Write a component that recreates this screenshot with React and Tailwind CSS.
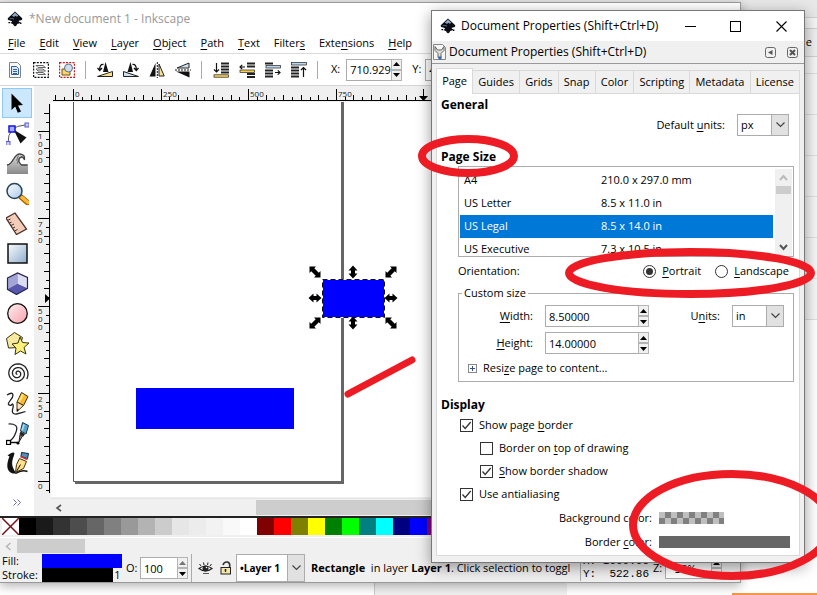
import React from "react";

/* Renders a label in which the character after "_" is the underlined access key. */
function Key({ children }) {
  const at = children.indexOf("_");
  if (at < 0) return <>{children}</>;
  return (
    <>
      {children.slice(0, at)}
      <span className="underline underline-offset-2">{children[at + 1]}</span>
      {children.slice(at + 2)}
    </>
  );
}

function InkscapeLogo() {
  return (
    <svg width="16" height="16" viewBox="0 0 16 16" aria-hidden="true">
      <path d="M8 0.5 L15 7 Q16.2 8.8 13 9.4 Q10.6 9.8 12.4 11 Q14.6 11.8 11.8 12.6 Q9.8 13 9.6 14.2 Q8.2 16 6.8 14.6 Q6.6 13.2 4.6 12.6 Q2.8 12 4.8 11 Q5.6 10 3 9.4 Q-0.2 8.8 1 7 Z" fill="#0b0b12" />
      <path d="M8 1.4 L11.4 4.8 L9.8 5.8 L8.4 4.8 L7 6 L5.6 5 L4.6 4.9 Z" fill="#8fa6c4" />
      <path d="M2.6 7.8 Q5 6.8 7 8.2" stroke="#56678a" fill="none" />
      <path d="M1.4 11.6h1.8M13 12.2h1.4" stroke="#111" strokeWidth="1.4" />
    </svg>
  );
}

const menus = ["_File", "_Edit", "_View", "_Layer", "_Object", "_Path", "_Text", "Filter_s", "Exte_nsions", "_Help"];

function Stack({ bars, accent, color, arrow }) {
  return (
    <>
      {bars.map(([x, y, w], i) => (
        <path key={i} d={`M${x} ${y}h${w}`} stroke="#222" strokeWidth="2" />
      ))}
      <rect x={accent[0]} y={accent[1]} width={accent[2]} height="2.4" fill={color} stroke="#222" strokeWidth="0.7" />
      <path d={arrow} stroke="#111" strokeWidth="1.2" fill="none" />
    </>
  );
}

const toolbar = [
  ["Select all", <>
    <path d="M2.500 .5h8l3 3v12h-11z" fill="#f7f8f8" stroke="#7b8388" />
    <path d="M4.500 4.500h5l2 2v6h-7z" fill="#dbe8fa" stroke="#2f5f9f" />
    <path d="M6 7.500h4M6 9.500h4M6 11.500h4" stroke="#2f5f9f" />
  </>],
  ["Select all in layers", <>
    <rect x=".6" y=".6" width="14.800" height="14.800" fill="none" stroke="#111" strokeWidth="1.2" strokeDasharray="2 1.2" />
    <path d="M3 3.500h7l2.500 2H5zM3 7h7l2.500 2H5zM3 10.500h7l2.500 2H5z" fill="#eee" stroke="#666" />
  </>],
  ["Deselect", <>
    <rect x=".6" y=".6" width="14.800" height="14.800" fill="none" stroke="#d01818" strokeWidth="1.2" strokeDasharray="2 1.2" />
    <path d="M3 7h8v6H3z" fill="#fbd66a" stroke="#6d5210" />
    <circle cx="9.500" cy="6" r="4" fill="#cfdcec" stroke="#5c7089" />
  </>],
  null,
  ["Rotate 90° counter-clockwise", <>
    <path d="M8.500 0L11.500 10H6z" fill="#111" />
    <path d="M.5 14.500L15.500 9.500V14.500z" fill="#fbe08c" stroke="#222" />
    <path d="M6.500 2.500Q2.500 2 2.700 8M.5 6l2.200 2.500L5 6" fill="none" stroke="#111" strokeWidth="1.300" />
  </>],
  ["Rotate 90° clockwise", <>
    <path d="M7.500 0L4.500 10H10z" fill="#111" />
    <path d="M15.500 14.500L.5 9.500V14.500z" fill="#cfe0ee" stroke="#222" />
    <path d="M9.500 2.500Q13.500 2 13.300 8M15.500 6l-2.200 2.500L11 6" fill="none" stroke="#111" strokeWidth="1.300" />
  </>],
  ["Flip horizontally", <>
    <path d="M6.500 1v13.500H.5z" fill="#111" /><path d="M10 2v12h5.200z" fill="#fbe08c" stroke="#222" />
    <path d="M8.300 0v16" stroke="#111" strokeDasharray="2 1" />
  </>],
  ["Flip vertically", <>
    <path d="M14 6V1L2 6z" fill="#cfe0ee" stroke="#222" /><path d="M14.500 9.500v6L1 9.500z" fill="#111" />
    <path d="M0 8h16" stroke="#111" strokeDasharray="2 1" />
  </>],
  null,
  ["Lower to bottom", <Stack bars={[[8, 1.5, 8], [8, 4.5, 8], [8, 7.500, 8], [8, 10.500, 8]]} accent={[1, 12.800, 14.500]} color="#fbcf50" arrow="M3.500 1v9M1 7.500l2.500 2.500L6 7.500" />],
  ["Lower", <Stack bars={[[8, 1.5, 8], [8, 4.500, 8], [8, 12, 8], [8, 15, 8]]} accent={[1, 8, 14.500]} color="#fbcf50" arrow="M6 5H1M3.200 2.800L1 5l2.200 2.200" />],
  ["Raise", <Stack bars={[[0, 1.5, 8], [0, 8.500, 8], [0, 11.500, 8], [0, 14.500, 8]]} accent={[1, 3.600, 14.500]} color="#bcd6f0" arrow="M10 10.500h5M12.800 8.300l2.200 2.200-2.200 2.200" />],
  ["Raise to top", <Stack bars={[[0, 5.5, 8], [0, 8.500, 8], [0, 11.500, 8], [0, 14.500, 8]]} accent={[.5, .6, 15]} color="#bcd6f0" arrow="M12.500 15V5.500M10 8l2.500-2.500L15 8" />],
  null,
];

/* Archimedean spiral, clockwise from the centre, ending at the lower right. */
const spiral = Array.from({ length: 85 }, (_, i) => {
  const t = i / 84;
  const angle = Math.PI * (0.17 - 5.6 * (1 - t));
  const r = 0.6 + 10.2 * t;
  return `${(11 + r * Math.cos(angle)).toFixed(1)},${(11 + r * Math.sin(angle)).toFixed(1)}`;
}).join(" ");

const tools = [
  ["Select", <path d="M5 1l11.500 11.500-5 .4 3 6-3.200 1.400-2.600-6.200L5 17.500z" fill="#000" />],
  ["Node", <>
    <path d="M1.500 21Q1 3 19 2.500" stroke="#555" fill="none" />
    <path d="M7 7l13 8-6 6z" fill="#111" />
    <rect x="2.500" y="3.500" width="6" height="6" fill="#a9b0f2" stroke="#1515e0" strokeWidth="1.500" />
    <rect x="18.500" y=".5" width="4" height="4" fill="#c8cbf7" stroke="#5558d8" /><rect x="-.5" y="19" width="4" height="4" fill="#c8cbf7" stroke="#5558d8" />
  </>],
  ["Tweak", <>
    <path d="M.5 12C7 12 7 2 13 2q6 .5 5 5.500-2-3-4.500-1-2.500 4 2 6l6-.5v9.500H.5z" fill="url(#grey)" />
    <path d="M.5 12.500C7 12 7 1 13.500 1.500q5.500.5 4.500 6-1-4-4.500-2.500-3 3.500 1.500 7.500h6" fill="none" stroke="#444" strokeWidth="1.300" />
    <path d="M10 8l2-5M11 11l1-4M14 3.500l2 1" stroke="#444" strokeWidth=".8" />
  </>],
  ["Zoom", <>
    <path d="M14.500 14.500l7 6" stroke="#a86200" strokeWidth="5.500" strokeLinecap="round" /><path d="M15.500 15l6 5" stroke="#fdb835" strokeWidth="3.500" strokeLinecap="round" />
    <circle cx="8" cy="8.500" r="7.500" fill="url(#lens)" stroke="#26425f" strokeWidth="1.500" />
  </>],
  ["Measure", <>
    <path d="M-.5 5.500L8.500.5l11.500 16-10 5.500z" fill="#f4ccba" stroke="#4b302a" strokeWidth="1.300" />
    <path d="M1 8l3-1.500M3 10.500l2-1M4.500 13l3-1.500M6.500 15.500l2-1M8 18.500l3-1.500" stroke="#4b302a" />
  </>],
  ["Rectangle", <rect x="1.500" y="1.500" width="19" height="19" fill="url(#box)" stroke="#111" strokeWidth="1.500" />],
  ["3D box", <>
    <path d="M1 5.500L11 .5l10 4.500v11L10 22 1 17z" fill="#5b5ba8" />
    <path d="M1 5.500L11 .5v11L1 17z" fill="#a3a5d6" /><path d="M11 .5l10 4.500v11l-10-4.500z" fill="#dcdcf2" /><path d="M1 17l10-5.500 10 4.500-11 6z" fill="#5757ad" />
    <path d="M1 5.500L11 .5l10 4.500v11L10 22 1 17z" fill="none" stroke="#25254d" strokeWidth="1.200" />
  </>],
  ["Ellipse", <circle cx="11" cy="11" r="9.800" fill="url(#pink)" stroke="#111" strokeWidth="1.300" />],
  ["Star", <>
    <path d="M0 6L8 0l8 5-3 10-11 .5z" fill="#f6eaa0" stroke="#39330b" />
    <path d="M13.500 4.500l2.500 5.500 6.500.5-5 4.500 2 6.500-5.500-3-5.500 3.500 1-6.500-4-4 6-1z" fill="#fdf07a" stroke="#39330b" />
  </>],
  ["Spiral", <polyline points={spiral} fill="none" stroke="#222" strokeWidth="1.300" />],
  ["Pencil", <>
    <path d="M.5 2.500Q6-1 6.500 2.500C6.500 7 1 9 2 12q2 2 4-.5 1.500 1 0 5.500-1 5 4 4.500 6-1.500 9-2.500" fill="none" stroke="#222" strokeWidth="1.300" />
    <path d="M15 0l6.500 4L17 13l-6.500-3.500z" fill="#f8b830" stroke="#4b2e00" /><path d="M16.500 2L12.500 9.500" stroke="#ffe680" strokeWidth="2" />
    <path d="M10.500 9.500L17 13l-6.500 6z" fill="#f7e3c0" stroke="#4b2e00" /><path d="M10.500 19l.1-3 2 1.200z" fill="#111" />
  </>],
  ["Bezier", <>
    <path d="M2 1.500Q12 1 10 8T4 18" fill="none" stroke="#222" strokeWidth="1.200" /><path d="M3 20h8" stroke="#111" strokeWidth="1.500" />
    <path d="M16 0l6 3-2.500 8.500-5.500-3z" fill="#5aa4cc" stroke="#10374c" /><path d="M17.500 2L15.500 8" stroke="#b9dcf0" strokeWidth="1.500" />
    <path d="M14 9l4.500 2.500-1.500 2.500-4-2.500z" fill="#222" /><path d="M13.500 12l2.500 1.500-3.500 6z" fill="#888" stroke="#222" />
    <rect x="0" y="18" width="4" height="4" fill="#fff" stroke="#000" strokeWidth="1.300" /><circle cx="11.500" cy="20.500" r="1.600" />
  </>],
  ["Calligraphy", <>
    <path d="M1 3Q7-2 8 1C6 8 3 12 10 21 0 22-1 13 3 4z" fill="#111" /><path d="M9 21q6-4 12-2" stroke="#111" strokeWidth="1.500" fill="none" />
    <path d="M15 0l7 1-1 5-6.500-2z" fill="#4e94c0" stroke="#123" /><path d="M14 4l7 3" stroke="#c33" strokeWidth="1.800" /><path d="M13 6l7 3-3 7-8 4 1-8z" fill="#fce08c" stroke="#4b2e00" /><path d="M10 19l4-7" stroke="#111" />
  </>],
];

const swatches = [
  "#000000", "#1a1a1a", "#333333", "#4d4d4d", "#666666", "#808080", "#999999", "#b3b3b3", "#cccccc", "#e6e6e6",
  "#ececec", "#f2f2f2", "#f9f9f9", "#ffffff", "#800000", "#ff0000", "#808000", "#ffff00", "#008000", "#00ff00",
  "#008080", "#00ffff", "#000080", "#0000ff", "#800080",
];

function Arrow({ d, label, dim }) {
  return (
    <button aria-label={label} className="flex h-[11px] w-[11px] items-center justify-center border border-[#b4b4b4] bg-[#f0f0f0]">
      <svg width="7" height="4" viewBox="0 0 7 4"><path d={d} fill={dim ? "#777" : "#000"} /></svg>
    </button>
  );
}

function Spin({ id, label, value, width, dim }) {
  return (
    <div className="flex items-center">
      <input id={id} aria-label={label} defaultValue={value} className={`h-[22px] border border-r-0 border-[#acacac] bg-white pl-[3px] outline-none ${width}`} />
      <div className="flex shrink-0 flex-col">
        <Arrow label={`${label} up`} d="M0 4L3.500 0L7 4z" dim={dim} />
        <Arrow label={`${label} down`} d="M0 0L3.500 4L7 0z" />
      </div>
    </div>
  );
}

function Drop({ id, label, value, width, height, bold }) {
  return (
    <div className={`grid shrink-0 ${width} ${height}`}>
      <select id={id} aria-label={label} className={`col-start-1 row-start-1 appearance-none border border-[#acacac] bg-white pl-[3px] outline-none ${bold ? "text-[10px] font-bold" : ""}`}>
        <option>{value}</option>
      </select>
      <span className="pointer-events-none col-start-1 row-start-1 flex w-[18px] items-center justify-center justify-self-end border border-[#acacac] bg-[#e1e1e1]">
        <svg width="9" height="6" viewBox="0 0 9 6"><path d="M.5 .5l4 4 4-4" fill="none" stroke="#444" strokeWidth="1.200" /></svg>
      </span>
    </div>
  );
}

const corner = "M-5.500-5.500L1-5.500-.7-3.800 3.800.7 5.500-1V5.500H-1L.7 3.800-3.800-.7-5.500 1z";
const side = "M-6.500 0L-1.500-4.500V-2H1.500V-4.500L6.500 0 1.500 4.500V2H-1.500V4.500z";
const handles = [
  [315, 272, 0, corner], [391, 272, 90, corner], [315, 323, 90, corner], [391, 323, 0, corner],
  [353, 272, 90, side], [353, 323, 90, side], [315, 298, 0, side], [391, 298, 0, side],
];

/* Rulers, page outline and the drawn objects. */
function Canvas() {
  const across = [];
  for (let k = -2; k <= 60; k++) {
    const x = Math.round(73 + k * 8.76) + 0.5;
    const h = k % 10 === 0 ? 11 : k % 2 === 0 ? 5 : 3;
    across.push(<path key={k} d={`M${x} 100v${-h}`} />);
  }
  const down = [];
  for (let k = -1; k <= 42; k++) {
    const y = Math.round(481 - k * 8.76) + 0.5;
    const w = k % 10 === 0 ? 11 : k % 2 === 0 ? 5 : 3;
    down.push(<path key={k} d={`M49 ${y}h${-w}`} />);
  }
  return (
    <svg className="block min-h-0 w-full flex-1" aria-label="Drawing canvas">
      <g transform="translate(-34 -86)">
        <rect x="34" y="86" width="720" height="420" fill="#f0f0f0" />
        <rect x="51" y="102" width="700" height="395" fill="#fff" />
        <g stroke="#000" fill="none">
          {across}
          {down}
          <path d="M53 100.500H740M49.500 104V493" />
        </g>
        <g fontSize="8" fill="#222">
          {[["0", 75], ["250", 163], ["500", 250], ["750", 338]].map(([t, x]) => (
            <text key={t} x={x} y="97">{t}</text>
          ))}
          {[["1000", 139], ["750", 227], ["500", 314], ["250", 402], ["0", 489]].map(([t, y]) =>
            t.split("").map((c, i) => <text key={t + i} x="38" y={y + i * 8}>{c}</text>)
          )}
        </g>
        <path d="M419 96h9l-4.500 5zM45 294v9l5-4.500z" />
        <path d="M73.500 102V481.500H342" fill="none" stroke="#555" />
        <path d="M342.500 102V484M75 482.500H344" stroke="#666" strokeWidth="3" fill="none" />
        <rect x="136" y="388" width="158" height="41" fill="#00f" />
        <rect x="322.500" y="279.500" width="62" height="38" fill="#00f" stroke="#fff" />
        <rect x="322.500" y="279.500" width="62" height="38" fill="none" stroke="#111" strokeDasharray="5 3" />
        {handles.map(([x, y, r, d]) => (
          <path key={`${x}-${y}`} d={d} transform={`translate(${x} ${y}) rotate(${r})`} />
        ))}
      </g>
    </svg>
  );
}

function MainWindow() {
  return (
    <section className="absolute bottom-3 left-0 right-[76px] top-0.5 flex flex-col border border-l-0 border-[#999] bg-white shadow-[0_3px_10px_rgba(0,0,0,0.3)]">
      <header className="flex h-[31px] shrink-0 items-center gap-1.5 pl-[7px] text-[12px] text-[#999]">
        <InkscapeLogo />
        <h1>*New document 1 - Inkscape</h1>
      </header>
      <nav className="flex h-5 shrink-0 items-center gap-3.5 border-b border-[#dcdcdc] pl-2">
        {menus.map((m) => <button key={m}><Key>{m}</Key></button>)}
      </nav>
      <div className="flex h-8 shrink-0 items-center gap-2.5 overflow-hidden border-b border-[#d5d5d5] pl-[7px]">
        {toolbar.map((t, i) => t ? (
          <button key={i} aria-label={t[0]} className="shrink-0"><svg width="16" height="16" viewBox="0 0 16 16">{t[1]}</svg></button>
        ) : (
          <span key={i} className="mr-px h-[18px] w-px shrink-0 bg-[#aaa]" />
        ))}
        <div className="ml-0.5 flex shrink-0 items-center gap-1.5">
          <label htmlFor="pos-x">X:</label>
          <Spin id="pos-x" label="X" value="710.929" width="w-[45px]" />
        </div>
        <div className="flex shrink-0 items-center gap-1">
          <label htmlFor="pos-y">Y:</label>
          <Spin id="pos-y" label="Y" value="4" width="w-[45px]" />
        </div>
      </div>

      <main className="flex min-h-0 flex-1">
        <aside className="flex w-[34px] shrink-0 flex-col items-center pt-0.5">
          {tools.map(([name, art], i) => (
            <button key={name} aria-label={name} className={`flex h-[30px] w-[30px] shrink-0 items-center justify-center border ${i === 0 ? "border-[#90c8f6] bg-[#cce8ff]" : "border-transparent"}`}>
              <svg width="23" height="23" viewBox="-0.5 -0.5 23 23">{art}</svg>
            </button>
          ))}
          <button aria-label="More tools" className="mt-4 flex h-4 items-center">
            <svg width="9" height="7" viewBox="0 0 9 7"><path d="M.5 .5l3 3-3 3M4.500 .5l3 3-3 3" fill="none" stroke="#6a6ab0" /></svg>
          </button>
        </aside>
        <div className="flex min-w-0 flex-1 flex-col">
          <Canvas />
          <div className="flex h-[18px] shrink-0 bg-[#f0f0f0] pl-[17px]">
            <div className="flex flex-1 items-center border-t border-[#e4e4e4]">
              <svg width="8" height="8" viewBox="0 0 8 8" className="ml-1"><path d="M6 1L2 4l4 3" fill="none" stroke="#555" strokeWidth="1.600" /></svg>
              <div className="ml-[193px] h-[15px] flex-1 bg-[#cdcdcd]" />
            </div>
          </div>
        </div>
      </main>

      <div className="flex h-[21px] shrink-0 items-start overflow-hidden border-t-2 border-[#222] bg-[#f0f0f0] pl-0.5">
        <button aria-label="No colour" className="h-[17px] w-[17px] shrink-0 bg-white">
          <svg width="17" height="17" viewBox="0 0 17 17"><path d="M0 0L17 17M17 0L0 17" stroke="#7a1218" strokeWidth="1.500" /></svg>
        </button>
        {swatches.map((c) => <button key={c} aria-label={c} className="h-[17px] w-[17px] shrink-0" style={{ backgroundColor: c }} />)}
      </div>
      <div className="flex h-[17px] shrink-0 items-center border-t border-white bg-[#f0f0f0]">
        <svg width="17" height="9" viewBox="0 0 17 9"><path d="M10.500 1L6.500 4.500l4 3.500" fill="none" stroke="#b5b5b5" strokeWidth="1.500" /></svg>
        <div className="h-[14px] w-[68px] bg-[#cdcdcd]" />
      </div>

      <footer className="flex h-7 shrink-0 items-center overflow-hidden bg-[#f0f0f0]">
        <div className="w-[42px] shrink-0 pl-0.5 leading-[14px]"><p>Fill:</p><p>Stroke:</p></div>
        <div className="w-20 shrink-0 leading-[14px]">
          <div className="h-[14px] bg-[#0000ff]" />
          <div className="flex"><div className="h-[14px] flex-1 bg-black" /><span className="w-[9px] text-center">1</span></div>
        </div>
        <label htmlFor="opacity" className="ml-1 w-[14px] shrink-0">O:</label>
        <Spin id="opacity" label="Opacity" value="100" width="w-[37px]" dim />
        <span className="ml-[3px] h-7 w-px shrink-0 bg-[#aaa]" />
        <button aria-label="Toggle layer visibility" className="ml-1.5 shrink-0">
          <svg width="15" height="13" viewBox="0 0 15 13">
            <path d="M1 6.500Q7.500 1.500 14 6.500 7.500 11.500 1 6.500z" fill="#fff" stroke="#222" strokeWidth="1.200" />
            <circle cx="7.500" cy="6.500" r="3" fill="#222" /><circle cx="8.500" cy="5.500" r=".8" fill="#fff" />
            <path d="M3 4L1.500 2M6 3L5.500 .5M9.500 3L10 .5M12 4l1.500-2" stroke="#222" /><path d="M5 11.500h6" stroke="#555" />
          </svg>
        </button>
        <button aria-label="Lock layer" className="ml-[7px] shrink-0">
          <svg width="12" height="14" viewBox="0 0 12 14">
            <path d="M3 4q1-3.500 4.500-3Q10.500 2 9.500 6" fill="none" stroke="#333" strokeWidth="1.600" />
            <rect x="1" y="6.500" width="9.500" height="6.500" fill="#f2e6a8" stroke="#222" /><path d="M5.500 8v3M4.500 9h2" stroke="#222" strokeWidth="1.200" />
          </svg>
        </button>
        <div className="ml-1"><Drop id="layer" label="Layer" value="•Layer 1" width="w-[69px]" height="h-7" bold /></div>
        <p className="ml-1.5 min-w-0 flex-1 whitespace-nowrap"><b>Rectangle</b>&nbsp; in layer <b>Layer 1</b>. Click selection to toggl</p>
        <div className="flex w-[160px] shrink-0 items-center border-l border-[#aaa] pl-0.5">
          <pre className="font-['Liberation_Mono'] text-[11px] leading-[13px]">{"X: 1000.06\nY:  522.86"}</pre>
          <label htmlFor="zoom" className="ml-1 w-3">Z:</label>
          <Spin id="zoom" label="Zoom" value="  35%" width="w-[46px]" />
        </div>
      </footer>
    </section>
  );
}

const tabs = ["Page", "Guides", "Grids", "Snap", "Color", "Scripting", "Metadata", "License"];
const papers = [["A4", "210.0 x 297.0 mm"], ["US Letter", "8.5 x 11.0 in"], ["US Legal", "8.5 x 14.0 in"], ["US Executive", "7.3 x 10.5 in"]];

function Check({ label, checked, inset }) {
  return (
    <label className={`flex h-[23px] items-center gap-1.5 ${inset ? "ml-5" : ""}`}>
      <span className="grid h-[13px] w-[13px]">
        <input type="checkbox" defaultChecked={checked} className="peer col-start-1 row-start-1 h-[13px] w-[13px] appearance-none border border-[#333] bg-white" />
        <svg viewBox="0 0 13 13" className="pointer-events-none invisible col-start-1 row-start-1 h-[13px] w-[13px] peer-checked:visible"><path d="M2.500 6.500l2.700 3 5.500-6.500" fill="none" stroke="#333" strokeWidth="1.300" /></svg>
      </span>
      <span><Key>{label}</Key></span>
    </label>
  );
}

function Radio({ label, checked }) {
  return (
    <label className="flex items-center gap-1.5">
      <span className="grid h-[13px] w-[13px] place-items-center">
        <input type="radio" name="orientation" defaultChecked={checked} className="peer col-start-1 row-start-1 h-[13px] w-[13px] appearance-none rounded-full border border-[#333] bg-white" />
        <span className="pointer-events-none invisible col-start-1 row-start-1 h-[7px] w-[7px] rounded-full bg-[#333] peer-checked:visible" />
      </span>
      <span><Key>{label}</Key></span>
    </label>
  );
}

function Dialog() {
  return (
    <section role="dialog" aria-label="Document Properties" className="absolute bottom-8 right-3 top-2.5 flex w-[374px] flex-col border border-[#777] bg-[#f0f0f0] shadow-[0_4px_14px_rgba(0,0,0,0.4)]">
      <header className="flex h-[30px] shrink-0 items-center bg-white pl-2 text-[12px]">
        <InkscapeLogo />
        <h2 className="ml-[5px] flex-1">Document Properties (Shift+Ctrl+D)</h2>
        <button aria-label="Minimize" className="flex w-[45px] justify-center"><svg width="11" height="11"><path d="M0 5.500h11" stroke="#000" /></svg></button>
        <button aria-label="Maximize" className="flex w-[45px] justify-center"><svg width="11" height="11"><rect x=".5" y=".5" width="10" height="10" fill="none" stroke="#000" /></svg></button>
        <button aria-label="Close" className="flex w-[46px] justify-center"><svg width="11" height="11"><path d="M.5 .5l10 10M10.500 .5l-10 10" stroke="#000" strokeWidth="1.100" /></svg></button>
      </header>
      <div className="flex h-[23px] shrink-0 items-center border-b border-[#999] text-[12px]">
        <svg width="15" height="16" viewBox="0 0 15 16" className="mr-0.5">
          <path d="M1.500 .5h9l3 3v12h-12z" fill="#f5f5f3" stroke="#888" />
          <path d="M3 2.500v4l3 3v4h3v-4l3-3v-4l-2.500 3.500h-4z" fill="#ddd" stroke="#666" /><path d="M6.500 12.500h3v3h-3z" fill="#2f66b8" />
        </svg>
        <span className="flex-1">Document Properties (Shift+Ctrl+D)</span>
        <button aria-label="Iconify"><svg width="11" height="11"><rect x=".5" y=".5" width="10" height="10" rx="2" fill="none" stroke="#666" /><path d="M7.500 3v5L3 5.500z" fill="#555" /></svg></button>
        <button aria-label="Close panel" className="ml-[11px] mr-1.5"><svg width="11" height="11"><rect x=".5" y=".5" width="10" height="10" rx="2" fill="none" stroke="#666" /><path d="M3 3l5 5M8 3L3 8" stroke="#555" strokeWidth="2" /></svg></button>
      </div>
      <div className="flex min-h-0 flex-1 flex-col px-1 pb-1.5 pt-1">
        <div role="tablist" className="relative z-10 -mb-px flex h-[26px] items-end">
          {tabs.map((t, i) => (
            <button key={t} role="tab" aria-selected={i === 0} className={i === 0
              ? "h-[26px] grow border border-b-0 border-[#d9d9d9] bg-white text-center"
              : "h-6 grow border border-l-0 border-[#d9d9d9] text-center"}>{t}</button>
          ))}
        </div>
        <div role="tabpanel" className="flex-1 border border-[#d9d9d9] bg-white pl-1 pr-[5px]">
          <h3 className="mt-0.5 h-[18px] text-[12px] font-bold leading-[18px]">General</h3>
          <div className="flex h-[22px] items-center justify-end gap-3 pr-[5px]">
            <label htmlFor="default-units"><Key>Default _units:</Key></label>
            <Drop id="default-units" label="Default units" value="px" width="w-[52px]" height="h-[22px]" />
          </div>
          <h3 className="mt-3 h-[18px] text-[12px] font-bold leading-[18px]">Page Size</h3>
          <div className="ml-[17px] flex h-[91px] border border-[#acacac] px-px pt-0.5">
            <div className="flex-1 overflow-hidden">
              <table className="w-full border-collapse">
                <tbody>
                  {papers.map(([name, size], i) => (
                    <tr key={name} className={i === 2 ? "h-[23px] bg-[#0078d7] text-white" : "h-[23px]"}>
                      <td className="w-[137px] p-0 pl-1">{name}</td>
                      <td className="p-0 pl-1">{size}</td>
                    </tr>
                  ))}
                </tbody>
              </table>
            </div>
            <div className="ml-0.5 flex w-[17px] flex-col items-center bg-[#f0f0f0]">
              <svg width="17" height="17"><path d="M5 11l3.500-4 3.500 4" fill="none" stroke="#bbb" strokeWidth="2" /></svg>
              <div className="h-2 w-[15px] bg-[#cdcdcd]" />
              <svg width="17" height="17" className="mt-auto"><path d="M5 6l3.500 4 3.500-4" fill="none" stroke="#555" strokeWidth="2" /></svg>
            </div>
          </div>
          <div className="ml-[17px] flex h-[28px] items-center gap-3.5 pr-[5px]">
            <span className="flex-1">Orientation:</span>
            <Radio label="_Portrait" checked />
            <Radio label="_Landscape" />
          </div>
          <fieldset className="ml-[17px] h-[97px] border border-[#acacac] px-[9px]">
            <legend className="-ml-[6px] h-4 px-0.5 leading-4">Custom size</legend>
            <div className="grid grid-cols-[65px_auto_1fr_auto] items-center gap-x-3 gap-y-[5px] pt-1">
              <label htmlFor="page-width" className="text-right"><Key>_Width:</Key></label>
              <Spin id="page-width" label="Width" value="8.50000" width="w-[93px]" />
              <label htmlFor="page-units" className="text-right"><Key>U_nits:</Key></label>
              <Drop id="page-units" label="Units" value="in" width="w-[52px]" height="h-[22px]" />
              <label htmlFor="page-height" className="text-right"><Key>_Height:</Key></label>
              <Spin id="page-height" label="Height" value="14.00000" width="w-[93px]" />
            </div>
            <button className="mt-1.5 flex items-center gap-1.5">
              <svg width="9" height="9"><rect x=".5" y=".5" width="8" height="8" fill="#fff" stroke="#888" /><path d="M2 4.500h5M4.500 2v5" stroke="#35508c" /></svg>
              <span><Key>Resi_ze page to content...</Key></span>
            </button>
          </fieldset>
          <h3 className="mt-3.5 h-[18px] text-[12px] font-bold leading-[18px]">Display</h3>
          <div className="ml-[19px]">
            <Check label="Show page _border" checked />
            <Check label="Border on _top of drawing" inset />
            <Check label="_Show border shadow" checked inset />
            <Check label="Use antialiasing" checked />
          </div>
          <div className="mr-1 grid grid-cols-[1fr_131px] items-center gap-x-[7px] text-right leading-6">
            <span>Background color:</span>
            <button aria-label="Background color" className="h-3 w-[65px] bg-[#bfbfbf]"><svg width="65" height="12" className="block"><rect width="65" height="12" fill="url(#checks)" /></svg></button>
            <span><Key>Border _color:</Key></span>
            <button aria-label="Border color" className="h-3 bg-[#666]" />
          </div>
        </div>
      </div>
    </section>
  );
}

/* Page that shows through behind the two windows. */
function Backdrop() {
  return (
    <div className="flex h-full flex-col bg-[#f6f6f6]">
      <div className="h-[18px] border-b border-[#d0d0d0] bg-[#e8e8e8]" />
      <div className="h-[11px] border-b border-[#d0d0d0]" />
      <div className="flex h-7 items-center justify-end border-b border-[#d0d0d0] bg-[#efefef] pr-[5px]">e</div>
      <div className="h-[17px] border-b border-[#ddd]" />
      {[0, 1, 2, 3, 4, 5].map((i) => <div key={i} className="h-[41px] border-b border-[#dedede]" />)}
      <div className="flex-1 bg-white" />
      <div className="flex h-4 items-end bg-white">
        <div className="h-4 w-[375px] border-r border-[#ccc]" />
        <div className="h-4 w-48 bg-[#f0f0f0]" />
        <div className="ml-auto h-0.5 w-[85px] bg-[#f79646]" />
      </div>
    </div>
  );
}

export default function App() {
  return (
    <div className="relative h-screen overflow-hidden font-['Open_Sans','Noto_Sans',sans-serif] text-[11px] text-black">
      <svg width="0" height="0" className="absolute" aria-hidden="true">
        <defs>
          <linearGradient id="grey" x2="0" y2="1"><stop stopColor="#ddd" /><stop offset="1" stopColor="#888" /></linearGradient>
          <linearGradient id="lens" x2="1" y2="1"><stop stopColor="#fff" /><stop offset="1" stopColor="#a7c8ea" /></linearGradient>
          <linearGradient id="box" x2="1" y2="1"><stop stopColor="#fafcff" /><stop offset="1" stopColor="#8caecb" /></linearGradient>
          <linearGradient id="pink" x2="1" y2="1"><stop stopColor="#ffeef0" /><stop offset="1" stopColor="#f7a3ac" /></linearGradient>
          <pattern id="checks" width="12" height="12" patternUnits="userSpaceOnUse"><rect width="12" height="12" fill="#bfbfbf" /><path d="M6 0h6v6H6zM0 6h6v6H0z" fill="#808080" /></pattern>
        </defs>
      </svg>
      <Backdrop />
      <MainWindow />
      <Dialog />
      {/* Hand-drawn red marks over the windows */}
      <svg className="pointer-events-none absolute inset-0 h-full w-full" fill="none" stroke="#ed1c24" strokeWidth="8" aria-hidden="true">
        <ellipse cx="468" cy="156" rx="46" ry="17" />
        <ellipse cx="690" cy="273" rx="121" ry="21" />
        <ellipse cx="732" cy="525" rx="99" ry="51" />
        <path d="M348 394L412 360" strokeWidth="7" strokeLinecap="round" />
      </svg>
    </div>
  );
}
